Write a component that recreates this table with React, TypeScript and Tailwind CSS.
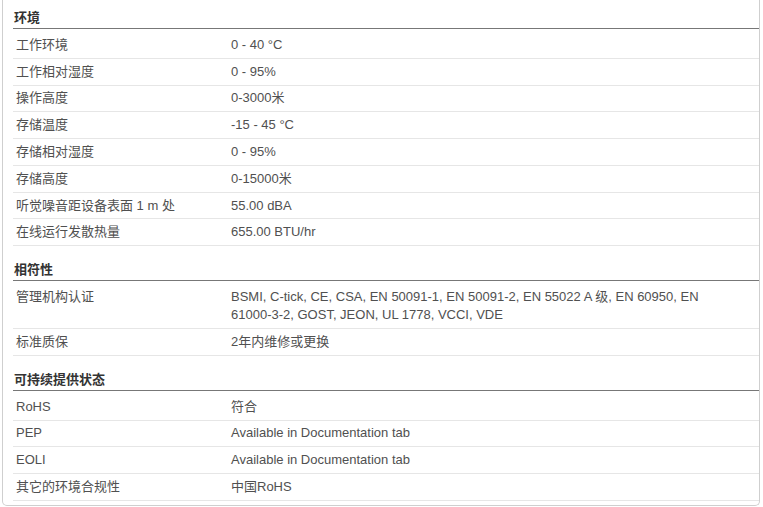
import { ReactNode } from "react";

type Row = { label: string; value: ReactNode };

type Section = { title: string; rows: Row[] };

const sections: Section[] = [
  {
    title: "环境",
    rows: [
      { label: "工作环境", value: "0 - 40 °C" },
      { label: "工作相对湿度", value: "0 - 95%" },
      { label: "操作高度", value: "0-3000米" },
      { label: "存储温度", value: "-15 - 45 °C" },
      { label: "存储相对湿度", value: "0 - 95%" },
      { label: "存储高度", value: "0-15000米" },
      { label: "听觉噪音距设备表面 1 m 处", value: "55.00 dBA" },
      { label: "在线运行发散热量", value: "655.00 BTU/hr" },
    ],
  },
  {
    title: "相符性",
    rows: [
      {
        label: "管理机构认证",
        value: (
          <>
            BSMI, <span className="whitespace-nowrap">C-tick</span>, CE, CSA,
            EN <span className="whitespace-nowrap">50091-1</span>, EN{" "}
            <span className="whitespace-nowrap">50091-2</span>, EN 55022 A 级,
            EN 60950, EN <span className="whitespace-nowrap">61000-3-2</span>,
            GOST, JEON, UL 1778, VCCI, VDE
          </>
        ),
      },
      { label: "标准质保", value: "2年内维修或更换" },
    ],
  },
  {
    title: "可持续提供状态",
    rows: [
      { label: "RoHS", value: "符合" },
      { label: "PEP", value: "Available in Documentation tab" },
      { label: "EOLI", value: "Available in Documentation tab" },
      { label: "其它的环境合规性", value: "中国RoHS" },
    ],
  },
];

function SpecSection({ title, rows }: Section) {
  return (
    <div className="mt-[15px] first:mt-0">
      <h3 className="border-b border-[#777] pl-[1px] pb-[1px] text-[13px] font-bold leading-[18px] text-[#333]">
        {title}
      </h3>
      <div className="mt-[3px]">
        {rows.map((row) => (
          <div
            key={row.label}
            className="flex border-b border-[#e6e6e6] py-[3.9px] text-[13px] leading-[18px] text-[#505050]"
          >
            <div className="w-[218px] shrink-0 pl-[3px]">{row.label}</div>
            <div className="flex-1 pr-[8px]">{row.value}</div>
          </div>
        ))}
      </div>
    </div>
  );
}

function App() {
  return (
    <div className="h-[507px] w-[763px] bg-white font-['Liberation_Sans','Noto_Sans_CJK_SC',sans-serif]">
      <div className="ml-[2px] w-[758px] rounded-b-[5px] border-x border-b border-[#cfcfcf] pl-[10px] pt-[9px] pb-[4px]">
        {sections.map((s) => (
          <SpecSection key={s.title} {...s} />
        ))}
      </div>
    </div>
  );
}

export default App;
